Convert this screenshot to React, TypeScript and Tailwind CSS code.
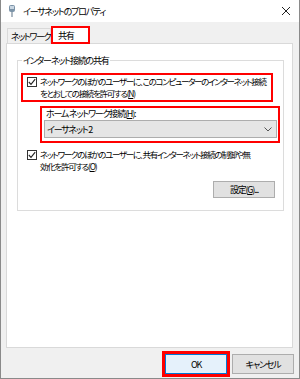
import React from "react";

function Check() {
  return (
    <span className="mt-[2px] flex h-[10px] w-[10px] shrink-0 items-center justify-center border border-[#333] bg-white">
      <svg width="8" height="8" viewBox="0 0 8 8">
        <path d="M0.8 4 L3 6.3 L7.2 1.2" fill="none" stroke="#222" strokeWidth="1.1" />
      </svg>
    </span>
  );
}

export default function App() {
  return (
    <div className="flex h-[379px] w-[300px] flex-col overflow-hidden border-x border-b border-[#8a8a8a] bg-[#f0f0f0] font-['Noto_Sans_CJK_JP',sans-serif] text-[9px] leading-[11px] tracking-[-1.2px] text-black [font-feature-settings:'palt']">
      {/* title bar */}
      <div className="flex h-[22px] shrink-0 items-center bg-white pl-[7px] pr-[8px]">
        <svg width="8" height="14" viewBox="0 0 8 14" className="mr-[7px] shrink-0">
          <rect x="1" y="1" width="6" height="7" rx="2" fill="#7b93a8" />
          <rect x="2" y="2" width="4" height="3" fill="#c9d6e2" />
          <rect x="3.3" y="8" width="1.4" height="5" fill="#8a9aa8" />
        </svg>
        <span className="whitespace-nowrap">イーサネットのプロパティ</span>
        <svg width="10" height="10" viewBox="0 0 10 10" className="ml-auto">
          <path d="M1 1 L9 9 M9 1 L1 9" stroke="#222" strokeWidth="1" />
        </svg>
      </div>

      {/* tabs */}
      <div className="flex h-[21px] items-end pl-[6px] pt-[5px]">
        <div className="flex h-[15px] w-[44px] items-center whitespace-nowrap border border-b-0 border-[#d9d9d9] pl-[3px] tracking-[-1.4px]">
          ネットワーク
        </div>
        <div className="relative z-10 -mb-[1px] flex h-[18px] w-[39px] items-center border-2 border-[#f00] bg-white pl-[5px]">
          共有
        </div>
      </div>

      {/* panel */}
      <div className="ml-[5px] mr-[6px] h-[305px] border border-[#d9d9d9] bg-white pl-[10px] pr-[8px] pt-[16px]">
        <div className="relative h-[151px] border border-[#dcdcdc] pl-[3px] pr-[2px] pt-[12px]">
          <span className="absolute -top-[6px] left-[4px] whitespace-nowrap bg-white px-[1px]">
            インターネット接続の共有
          </span>

          <div className="flex h-[29px] w-[252px] gap-[3px] border-2 border-[#f00] pl-[4px]">
            <Check />
            <span className="whitespace-nowrap text-[8.5px] leading-[12px] tracking-[-1.3px]">
              ネットワークのほかのユーザーに、このコンピューターのインターネット接続
              <br />
              をとおしての接続を許可する(<span className="underline">N</span>)
            </span>
          </div>

          <div className="ml-[19px] mt-[4px] h-[37px] w-[240px] border-2 border-[#f00] pl-[2px] pr-[1px]">
            <div className="h-[11px] whitespace-nowrap pl-[2px]">
              ホーム ネットワーク接続(<span className="underline">H</span>):
            </div>
            <div className="mt-[1px] flex h-[18px] items-center border border-[#adadad] bg-[#e5e5e5] pl-[2px] pr-[4px]">
              <span className="whitespace-nowrap">イーサネット 2</span>
              <svg width="8" height="5" viewBox="0 0 8 5" className="ml-auto">
                <path d="M0.5 0.5 L4 4 L7.5 0.5" fill="none" stroke="#555" strokeWidth="1" />
              </svg>
            </div>
          </div>

          <div className="ml-[6px] mt-[5px] flex h-[24px] gap-[3px]">
            <Check />
            <span className="whitespace-nowrap text-[8.5px] leading-[12px] tracking-[-1.3px]">
              ネットワークのほかのユーザーに、共有インターネット接続の制御や無
              <br />
              効化を許可する(<span className="underline">O</span>)
            </span>
          </div>

          <div className="mr-[6px] mt-[9px] flex justify-end">
            <div className="flex h-[17px] w-[62px] items-center justify-center whitespace-nowrap border border-[#adadad] bg-[#e1e1e1]">
              設定(<span className="underline">G</span>)...
            </div>
          </div>
        </div>
      </div>

      {/* buttons */}
      <div className="flex justify-end gap-[2px] pr-[5px] pt-[3px]">
        <div className="border-[3px] border-[#f00]">
          <div className="flex h-[20px] w-[62px] items-center justify-center border border-[#0078d7] bg-[#e5f1fb]">
            OK
          </div>
        </div>
        <div className="mt-[3px] flex h-[20px] w-[62px] items-center justify-center whitespace-nowrap border border-[#adadad] bg-[#e1e1e1]">
          キャンセル
        </div>
      </div>
    </div>
  );
}
